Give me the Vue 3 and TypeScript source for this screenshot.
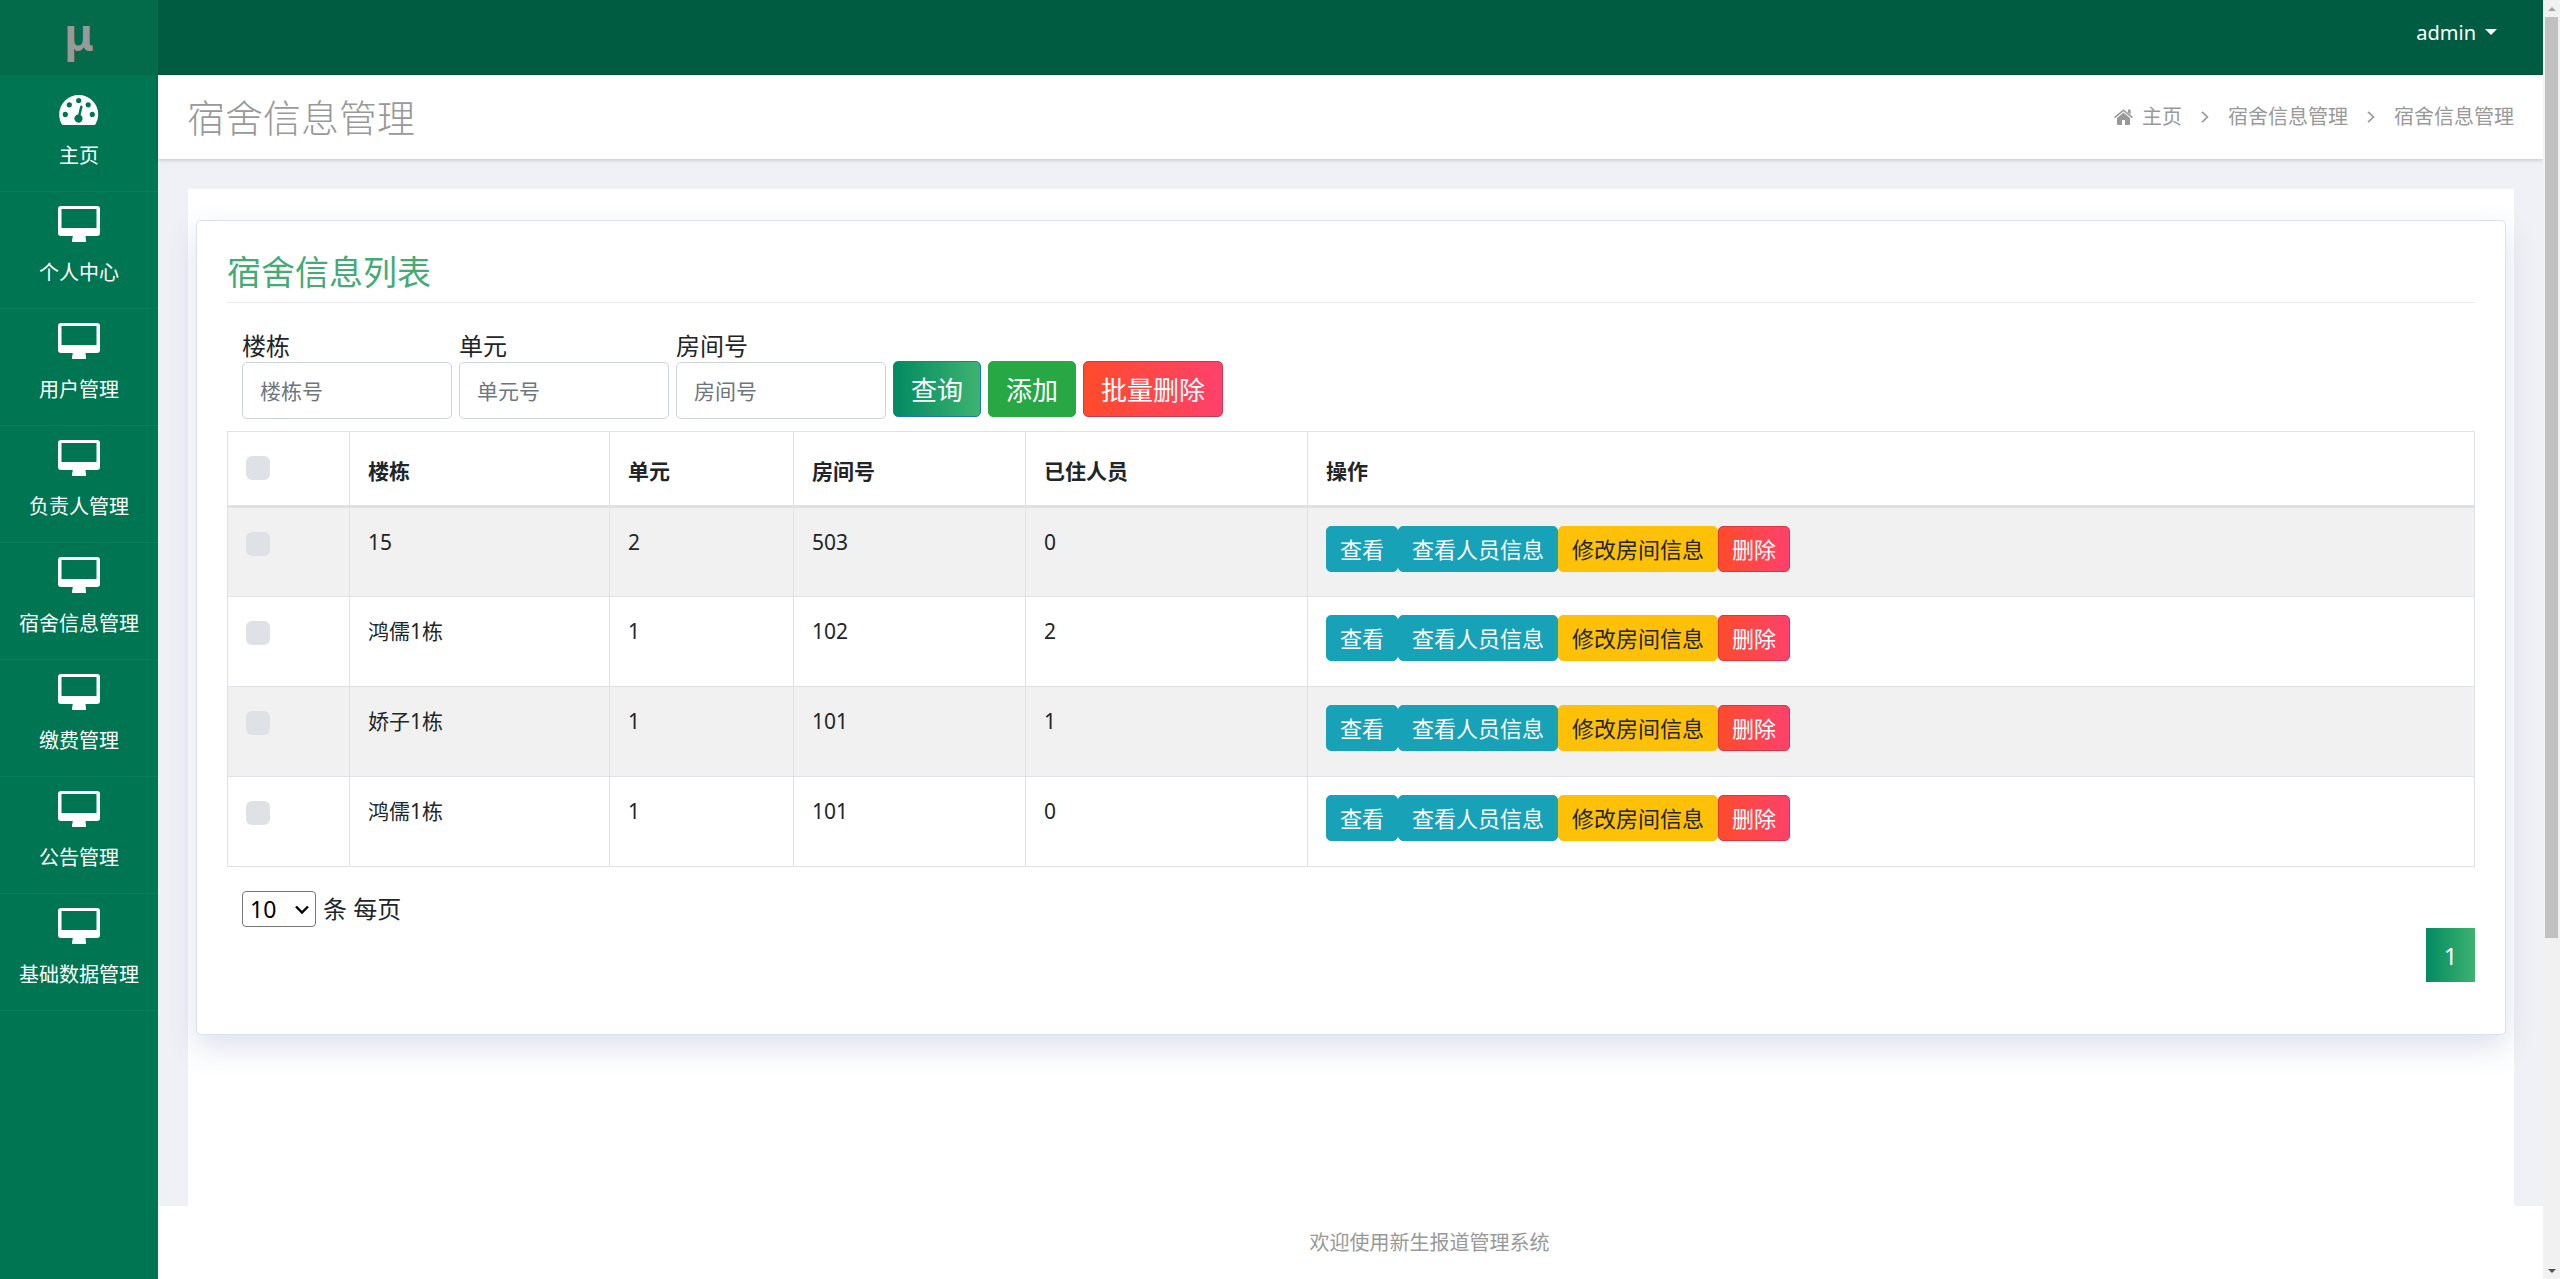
<script setup lang="ts">
import { ref } from 'vue'

interface Room {
  id: number
  building: string
  unit: string
  room: string
  occupied: number
}

const menu: string[] = ['个人中心', '用户管理', '负责人管理', '宿舍信息管理', '缴费管理', '公告管理', '基础数据管理']

const filters = [
  { key: 'building', label: '楼栋', hint: '楼栋号' },
  { key: 'unit', label: '单元', hint: '单元号' },
  { key: 'room', label: '房间号', hint: '房间号' },
]

const rooms: Room[] = [
  { id: 1, building: '15', unit: '2', room: '503', occupied: 0 },
  { id: 2, building: '鸿儒1栋', unit: '1', room: '102', occupied: 2 },
  { id: 3, building: '娇子1栋', unit: '1', room: '101', occupied: 1 },
  { id: 4, building: '鸿儒1栋', unit: '1', room: '101', occupied: 0 },
]

const query = ref<Record<string, string>>({ building: '', unit: '', room: '' })
const selected = ref<number[]>([])
const pageSize = ref('10')

function toggleAll(event: Event) {
  const checked = (event.target as HTMLInputElement).checked
  selected.value = checked ? rooms.map((r) => r.id) : []
}
</script>

<template>
  <div class="app">
    <nav class="sidebar">
      <a class="logo" href="#">μ</a>
      <a class="item" href="#">
        <span class="item-icon">
          <svg width="40" height="30" viewBox="0 0 40 30" aria-hidden="true">
            <path
              fill="#fff"
              fill-rule="evenodd"
              d="M19.7 0A19.5 19.5 0 0 0 .2 19.5c0 3.500.9 6.800 2.500 9.600.4.600.9.900 1.600.900h30.800c.7 0 1.200-.3 1.600-.9a19.500 19.500 0 0 0 2.500-9.600A19.500 19.500 0 0 0 19.700 0zM19.700 3a2.600 2.600 0 1 1 0 5.200 2.600 2.600 0 0 1 0-5.200zM10.300 7.200a2.600 2.600 0 1 1 0 5.200 2.600 2.600 0 0 1 0-5.200zM29.200 7.200a2.600 2.600 0 1 1 0 5.200 2.600 2.600 0 0 1 0-5.200zM6.300 16.800a2.600 2.600 0 1 1 0 5.200 2.600 2.600 0 0 1 0-5.200zM33.300 16.800a2.600 2.600 0 1 1 0 5.200 2.600 2.600 0 0 1 0-5.200zM22.300 10.600c.9.200 1.400.8 1.200 1.600l-1.900 7.900a4.100 4.100 0 1 1-2.400-.6l1.900-7.900c.2-.8.600-1.100 1.200-1z"
            />
          </svg>
        </span>
        <span>主页</span>
      </a>
      <a v-for="name in menu" :key="name" class="item" href="#">
        <span class="item-icon">
          <svg width="42" height="36" viewBox="0 0 42 36" aria-hidden="true">
            <path
              fill="#fff"
              fill-rule="evenodd"
              d="M3 0h36a3 3 0 0 1 3 3v24a3 3 0 0 1-3 3H27.500l.5 4.500V36H14v-1.500l.8-4.500H3a3 3 0 0 1-3-3V3a3 3 0 0 1 3-3zM3.500 3v19h35V3z"
            />
          </svg>
        </span>
        <span>{{ name }}</span>
      </a>
    </nav>

    <div class="main">
      <header class="topbar">
        <button class="user" type="button">admin<span class="caret"></span></button>
      </header>

      <div class="titlebar">
        <h1>宿舍信息管理</h1>
        <nav class="crumbs">
          <a class="home" href="#">
            <svg width="19" height="16" viewBox="0 0 19 16" aria-hidden="true">
              <path fill="#999" d="M9.500 3.600 3 9v6.300c0 .4.300.7.700.7H8v-5h3v5h4.300c.4 0 .7-.3.700-.7V9z" />
              <path fill="none" stroke="#999" stroke-width="1.600" d="M.5 8.700 9.500 1.200l9 7.500" />
              <path fill="#999" d="M14 .5h2.600v5L14 3.400z" />
            </svg>
            主页
          </a>
          <svg class="sep" width="8" height="12" viewBox="0 0 8 12" aria-hidden="true">
            <path d="M1 .8 6.500 6 1 11.200" fill="none" stroke="#999" stroke-width="1.700" />
          </svg>
          <a href="#">宿舍信息管理</a>
          <svg class="sep" width="8" height="12" viewBox="0 0 8 12" aria-hidden="true">
            <path d="M1 .8 6.500 6 1 11.200" fill="none" stroke="#999" stroke-width="1.700" />
          </svg>
          <span>宿舍信息管理</span>
        </nav>
      </div>

      <main class="content">
        <div class="panel">
          <section class="card">
            <h2>宿舍信息列表</h2>

            <form class="filters" @submit.prevent>
              <div v-for="f in filters" :key="f.key" class="field">
                <label :for="f.key">{{ f.label }}</label>
                <input :id="f.key" v-model="query[f.key]" type="text" :placeholder="f.hint" />
              </div>
              <button class="btn btn-query" type="submit">查询</button>
              <button class="btn btn-add" type="button">添加</button>
              <button class="btn btn-remove" type="button">批量删除</button>
            </form>

            <table>
              <colgroup>
                <col class="c-check" />
                <col class="c-building" />
                <col class="c-unit" />
                <col class="c-room" />
                <col class="c-occupied" />
                <col />
              </colgroup>
              <thead>
                <tr>
                  <th class="check"><input type="checkbox" aria-label="全选" @change="toggleAll" /></th>
                  <th>楼栋</th>
                  <th>单元</th>
                  <th>房间号</th>
                  <th>已住人员</th>
                  <th>操作</th>
                </tr>
              </thead>
              <tbody>
                <tr v-for="r in rooms" :key="r.id">
                  <td class="check">
                    <input v-model="selected" type="checkbox" :value="r.id" :aria-label="r.building + ' ' + r.room" />
                  </td>
                  <td>{{ r.building }}</td>
                  <td>{{ r.unit }}</td>
                  <td>{{ r.room }}</td>
                  <td>{{ r.occupied }}</td>
                  <td>
                    <div class="actions">
                      <button class="sm info" type="button">查看</button>
                      <button class="sm info" type="button">查看人员信息</button>
                      <button class="sm warn" type="button">修改房间信息</button>
                      <button class="sm danger" type="button">删除</button>
                    </div>
                  </td>
                </tr>
              </tbody>
            </table>

            <div class="page-size">
              <span class="select">
                <select id="page-size" v-model="pageSize">
                  <option>10</option>
                  <option>20</option>
                  <option>50</option>
                </select>
                <svg width="14" height="10" viewBox="0 0 14 10" aria-hidden="true">
                  <path d="M1 1.500 7 7.500l6-6" fill="none" stroke="#000" stroke-width="2.400" />
                </svg>
              </span>
              <label for="page-size">条 每页</label>
            </div>

            <div class="pager">
              <button type="button">1</button>
            </div>
          </section>
        </div>
      </main>

      <footer class="footer">欢迎使用新生报道管理系统</footer>
    </div>

    <div class="scrollbar" aria-hidden="true">
      <span class="arrow up"></span>
      <span class="track"><span class="thumb"></span></span>
      <span class="arrow down"></span>
    </div>
  </div>
</template>

<style>
body {
  background: #fff;
}
</style>

<style scoped>
.app,
.app * {
  box-sizing: border-box;
}

.app {
  display: flex;
  min-height: 100vh;
  font-family: 'Noto Sans', 'Noto Sans CJK SC', sans-serif;
  font-size: 20px;
  font-weight: 400;
  line-height: 32px;
  color: #212529;
}

a {
  color: inherit;
  text-decoration: none;
}

button,
input,
select {
  font-family: inherit;
  font-weight: inherit;
  margin: 0;
}

/* Sidebar */
.sidebar {
  flex: 0 0 158px;
  background: #007551;
  color: #fff;
}

.logo {
  display: flex;
  height: 75px;
  padding-bottom: 8px;
  align-items: center;
  justify-content: center;
  background: #036a4a;
  color: #999;
  font-size: 44px;
  font-weight: 700;
}

.item {
  display: flex;
  flex-direction: column;
  align-items: center;
  height: 117px;
  border-bottom: 1px solid #087e59;
}

.item-icon {
  display: flex;
  align-items: flex-end;
  height: 50px;
  margin-bottom: 15px;
}

/* Main column */
.main {
  flex: 1;
  min-width: 0;
  display: flex;
  flex-direction: column;
  background: #f0f1f6;
}

.topbar {
  display: flex;
  justify-content: flex-end;
  height: 75px;
  padding: 16px 46px 0 0;
  background: #005c41;
}

.user {
  display: flex;
  align-items: center;
  gap: 9px;
  height: 32px;
  padding: 0;
  border: 0;
  background: none;
  color: #fff;
  font-size: 20px;
}

.caret {
  border: 6px solid transparent;
  border-top-color: #fff;
  border-bottom: 0;
}

.titlebar {
  display: flex;
  align-items: center;
  justify-content: space-between;
  height: 84px;
  padding: 0 29px 0 29px;
  background: #fff;
  box-shadow: 0 1px 4px rgba(0, 0, 0, 0.2);
  color: #999;
}

h1 {
  margin: 0;
  font-size: 38px;
  font-weight: 300;
  line-height: 56px;
}

.crumbs {
  display: flex;
  align-items: center;
}

.home {
  display: flex;
  align-items: center;
  gap: 9px;
}

.sep {
  margin: 0 19px;
}

.content {
  flex: 1;
  display: flex;
  padding: 30px 29px 0 30px;
}

.panel {
  flex: 1;
  min-width: 0;
  padding: 31px 8px 0;
  background: #fff;
}

.card {
  padding: 30px;
  border: 1px solid #dee2ea;
  border-radius: 5px;
  background: #fff;
  box-shadow: 0 12px 30px rgba(60, 90, 150, 0.18);
}

h2 {
  margin: 0 0 26px;
  padding-bottom: 9px;
  border-bottom: 1px solid #e9ebee;
  color: #45aa76;
  font-size: 34px;
  font-weight: 400;
  line-height: 42px;
}

/* Filters */
.filters {
  display: flex;
  align-items: flex-end;
  gap: 7px;
  padding-left: 15px;
  margin-bottom: 12px;
}

.field {
  display: flex;
  flex-direction: column;
  width: 210px;
}

.field label {
  font-size: 24px;
  line-height: 33px;
}

.field input {
  width: 100%;
  height: 57px;
  padding: 0 17px;
  border: 1px solid #ced4da;
  border-radius: 5px;
  background: #fff;
  color: #495057;
  font-size: 21px;
}

.field input::placeholder {
  color: #6c757d;
  opacity: 1;
}

.btn {
  height: 56px;
  margin-bottom: 2px;
  padding: 0 17px;
  border: 1px solid;
  border-radius: 5px;
  color: #fff;
  font-size: 26px;
}

.btn-query {
  border-color: #1779ba;
  background: linear-gradient(to right, #038a62, #3eb370);
}

.btn-add {
  border-color: #28a745;
  background: #28a745;
}

.btn-remove {
  border-color: #c43a50;
  background: linear-gradient(to right, #ff4b2b, #ff416c);
}

/* Table */
table {
  width: 100%;
  table-layout: fixed;
  border-collapse: collapse;
  font-size: 21px;
}

.c-check {
  width: 122px;
}

.c-building {
  width: 260px;
}

.c-unit {
  width: 184px;
}

.c-room {
  width: 232px;
}

.c-occupied {
  width: 282px;
}

th,
td {
  padding: 18px;
  border: 1px solid #dee2e6;
  text-align: left;
  vertical-align: top;
}

th {
  height: 75px;
  padding-top: 23px;
  padding-bottom: 17px;
  border-bottom: 3px solid #dee2e6;
  font-weight: 700;
}

td {
  height: 90px;
}

tbody tr:nth-child(odd) {
  background: #f1f1f1;
}

.check {
  padding-top: 24px;
}

.check input {
  display: block;
  appearance: none;
  width: 24px;
  height: 24px;
  border-radius: 6px;
  background: #dee2e6;
}

.check input:checked {
  background: #038a62;
}

.actions {
  display: flex;
}

.sm {
  height: 46px;
  padding: 0 13px 2px;
  border: 1px solid;
  border-radius: 5px;
  color: #fff;
  font-size: 22px;
}

.info {
  border-color: #17a2b8;
  background: #17a2b8;
}

.warn {
  border-color: #ffc107;
  background: #ffc107;
  color: #212529;
}

.danger {
  border-color: #dc3545;
  background: linear-gradient(to right, #ff4b2b, #ff416c);
}

/* Paging */
.page-size {
  display: flex;
  align-items: center;
  gap: 7px;
  margin-top: 24px;
  padding-left: 15px;
}

.page-size label {
  font-size: 24px;
  line-height: 36px;
}

.select {
  position: relative;
  display: flex;
}

.select svg {
  position: absolute;
  top: 14px;
  right: 7px;
  pointer-events: none;
}

.select select {
  appearance: none;
  width: 74px;
  height: 36px;
  padding: 0 0 0 7px;
  border: 1px solid #767676;
  border-radius: 4px;
  background-color: #fff;
  color: #000;
  font-size: 23px;
}

.pager {
  display: flex;
  justify-content: flex-end;
  margin: 1px 0 22px;
}

.pager button {
  width: 49px;
  height: 54px;
  padding: 0;
  border: 0;
  background: linear-gradient(to right, #038a62, #3eb370);
  color: #fff;
  font-size: 24px;
}

.footer {
  height: 73px;
  padding: 21px 0 0 158px;
  background: #fff;
  color: #999;
  text-align: center;
}

/* Scrollbar strip */
.scrollbar {
  flex: 0 0 17px;
  display: flex;
  flex-direction: column;
  align-items: center;
  background: #f1f1f1;
}

.track {
  flex: 1;
  width: 13px;
}

.thumb {
  display: block;
  height: 74%;
  background: #c1c1c1;
}

.arrow {
  display: flex;
  align-items: center;
  height: 17px;
}

.arrow::before {
  content: '';
  border: 4px solid transparent;
}

.up::before {
  border-top: 0;
  border-bottom-color: #a3a3a3;
}

.down::before {
  border-bottom: 0;
  border-top-color: #505050;
}
</style>
